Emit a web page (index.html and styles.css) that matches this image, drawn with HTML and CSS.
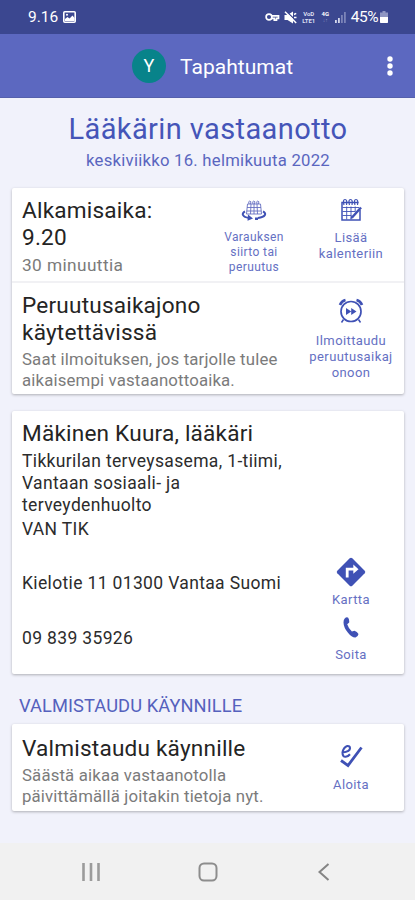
FILE: index.html
```html
<!DOCTYPE html>
<html lang="fi">
<head>
<meta charset="utf-8">
<title>Tapahtumat</title>
<link rel="stylesheet" href="styles.css">
</head>
<body>
<div class="status">
  <span class="clock">9.16</span>
  <svg class="photo" width="13" height="12" viewBox="0 0 13 12"><rect x=".8" y=".8" width="11.4" height="10.4" rx="1" fill="none" stroke="#fff" stroke-width="1.6"/><path d="M2 10V8l2.5-2 2 1.500L9.500 4.500 11.500 7v3z" fill="#fff"/><circle cx="4" cy="3.800" r="1" fill="#fff"/></svg>
  <div class="indicators">
    <svg width="15" height="10" viewBox="0 0 15 10" fill="none" stroke="#fff" stroke-width="1.700"><circle cx="4" cy="5" r="2.900"/><path d="M7 3.800h6.500v2.600h-2v1.800H9.300V6.400H7"/></svg>
    <svg class="mute" width="13" height="13" viewBox="0 0 13 13"><path d="M.5 4h3L9 .5v12L3.500 9h-3z" fill="#fff"/><path d="M2.300.3 13 10.700" stroke="#3b4790" stroke-width="1.200"/><path d="M1 .8 12.200 12M10 3.500l2.200-1.200M10 6.500h2.500" stroke="#fff" stroke-width="1.500"/></svg>
    <div class="volte"><span>VoD</span><span>LTE1</span></div>
    <div class="net"><span>4G</span><i>↓↑</i></div>
    <svg class="signal" width="11" height="11" viewBox="0 0 11 11"><path d="M0 8h1.800v3H0zM3 6h1.800v5H3z" fill="#d5d8eb"/><path d="M6 3h1.800v8H6zM9 0h1.800v11H9z" fill="#7c84b8"/></svg>
    <span class="percent">45%</span>
    <svg class="battery" width="8" height="12" viewBox="0 0 8 12"><path d="M2.500 0h3v1.500H8V6H0V1.500h2.500z" fill="#8f96c3"/><path d="M0 6h8v5.300q0 .7-.7.7H.7Q0 12 0 11.300z" fill="#fff"/></svg>
  </div>
</div>
<header class="appbar">
  <span class="avatar">Y</span>
  <h1 class="appname">Tapahtumat</h1>
  <svg class="more" width="6" height="20" viewBox="0 0 6 20" fill="#fff"><circle cx="3" cy="3" r="2.700"/><circle cx="3" cy="10" r="2.700"/><circle cx="3" cy="17" r="2.700"/></svg>
</header>
<main class="page">
  <h2 class="title">Lääkärin vastaanotto</h2>
  <p class="date">keskiviikko 16. helmikuuta 2022</p>

  <section class="card">
    <div class="row start">
      <div class="info">
        <h3 class="head">Alkamisaika:<br>9.20</h3>
        <p class="note duration">30 minuuttia</p>
      </div>
      <div class="action move">
        <svg width="26" height="24" viewBox="0 0 26 24" fill="none" stroke="#3f51b5"><g stroke-width=".9" stroke="#6670c2"><path d="M6.500 5h13l1 10h-15zM6 8.500h14M5.700 12h14.600M10 5l-.5 10M13 5v10M16 5l.5 10"/><path d="M8 5q-1-3 .8-3t.7 3M12 5q-1-3 .8-3t.7 3M16 5q-1-3 .8-3t.7 3"/></g><path d="M4 12.500c-4 2-2.500 5.500 4 6.500M22 12.500c4 2 2.500 5.500-5 6.500" stroke-width="2"/><path d="m7 15.500 5 4-5.500 2.200z" fill="#3f51b5" stroke="none"/><path d="M14 18.500h3v2.500h-3z" fill="#3f51b5" stroke="none"/></svg>
        <span>Varauksen<br>siirto tai<br>peruutus</span>
      </div>
      <div class="action add">
        <svg width="24" height="24" viewBox="0 0 24 24" fill="none" stroke="#3f51b5"><path d="M21 12v10H3V4.500h16.500" stroke-width="1.500"/><path d="M3.500 9.500H20M3.500 13.500h13M3.500 17.500h9M7.700 8.500v13M12 8.500v13M16.200 8.500v5" stroke-width=".9"/><path d="M5 7Q3.500 1.500 6 1.500T7.500 7M10.500 7Q9 1.500 11.500 1.500T13 7M16 7Q14.500 1.500 17 1.500T18.500 7" stroke-width="1.200"/><path d="m13 19.500 9-10" stroke-width="2.500"/><path d="m11.500 21 .7-3 2.200 2z" fill="#3f51b5" stroke="none"/></svg>
        <span>Lisää<br>kalenteriin</span>
      </div>
    </div>
    <div class="row queue">
      <div class="info">
        <h3 class="head">Peruutusaikajono<br>käytettävissä</h3>
        <p class="note">Saat ilmoituksen, jos tarjolle tulee<br>aikaisempi vastaanottoaika.</p>
      </div>
      <div class="action">
        <svg width="26" height="26" viewBox="0 0 26 26" fill="none" stroke="#3f51b5"><circle cx="13" cy="13.500" r="10" stroke-width="1.700"/><path d="M2 7q1.500-4 5.500-5M24 7q-1.500-4-5.500-5" stroke-width="2.700"/><path d="m5.500 21.500-2 3M20.500 21.500l2 3" stroke-width="1.500"/><path d="m8 10 5.300 3.500L8 17zM13.200 10l5.300 3.500-5.300 3.500z" fill="#3f51b5" stroke="none"/></svg>
        <span>Ilmoittaudu<br>peruutusaikaj<br>onoon</span>
      </div>
    </div>
  </section>

  <section class="card place">
    <h3 class="head doctor">Mäkinen Kuura, lääkäri</h3>
    <p class="body unit">Tikkurilan terveysasema, 1-tiimi,<br>Vantaan sosiaali- ja<br>terveydenhuolto</p>
    <p class="body code">VAN TIK</p>
    <div class="contact map">
      <p class="body">Kielotie 11 01300 Vantaa Suomi</p>
      <div class="action">
        <svg width="30" height="30" viewBox="0 0 30 30"><path d="M13.700 1.300q1.300-1.200 2.600 0l12.400 12.400q1.200 1.300 0 2.600L16.300 28.700q-1.300 1.200-2.600 0L1.300 16.300q-1.200-1.300 0-2.600z" fill="#3f51b5"/><path d="M11.200 20.500v-8.300h8" fill="none" stroke="#fff" stroke-width="2.800"/><path d="m17.300 7.500 5.200 4.700-5.200 4.500z" fill="#fff"/></svg>
        <span>Kartta</span>
      </div>
    </div>
    <div class="contact phone">
      <p class="body">09 839 35926</p>
      <div class="action">
        <svg width="16" height="21" viewBox="0 0 16 21"><path d="M1.500 1.700Q3.500-.3 5.200.7q1.300 2 1 4.800L4.200 7.300q1.300 4.200 4.700 7.200l2.600-.8q2.600.8 4 3.200-.5 2.700-3 3.600-3.800.2-7.500-4.700Q.6 10.600.5 5.500q0-2.500 1-3.800z" fill="#3f51b5"/></svg>
        <span>Soita</span>
      </div>
    </div>
  </section>

  <h2 class="section">VALMISTAUDU KÄYNNILLE</h2>
  <section class="card">
    <div class="row prepare">
      <div class="info">
        <h3 class="head">Valmistaudu käynnille</h3>
        <p class="note">Säästä aikaa vastaanotolla<br>päivittämällä joitakin tietoja nyt.</p>
      </div>
      <div class="action">
        <svg width="24" height="24" viewBox="0 0 24 24" fill="none" stroke="#3f51b5"><path d="M3.500 8.500Q11 7.500 11 4.200 10.800 1.600 8.300 2 4.500 3.300 3.500 8.500q0 4.500 3.200 4.200 2.500-.3 4.300-2.400" stroke-width="2.100"/><path d="m2 16.500 7 5L22.500 3.500" stroke-width="2.800"/></svg>
        <span>Aloita</span>
      </div>
    </div>
  </section>
</main>
<nav class="navbar">
  <svg width="18" height="18" viewBox="0 0 18 18" fill="none" stroke="#9b9b9b" stroke-width="2.600"><path d="M1.500 0v18M9 0v18M16.500 0v18"/></svg>
  <svg width="20" height="20" viewBox="0 0 20 20" fill="none" stroke="#8d8d8d" stroke-width="2"><rect x="1.500" y="1.500" width="17" height="17" rx="4.500"/></svg>
  <svg width="18" height="18" viewBox="0 0 18 18" fill="none" stroke="#858585" stroke-width="2"><path d="M13.500 1 4.500 9l9 8"/></svg>
</nav>
</body>
</html>
```
FILE: styles.css
```css
* { box-sizing: border-box; }
body, h1, h2, h3, p { margin: 0; font-weight: 400; }
body {
  width: 415px;
  height: 900px;
  overflow: hidden;
  display: flex;
  flex-direction: column;
  background: #f1f2fb;
  color: #242424;
  font-family: Roboto, "Liberation Sans", sans-serif;
  white-space: nowrap;
}
svg { display: block; flex: none; }

.status {
  flex: none;
  height: 34px;
  padding: 0 27px 0 28px;
  display: flex;
  align-items: center;
  background: #3b4790;
  color: #fff;
}
.clock { font-size: 15.500px; font-weight: 400; }
.photo { margin-left: 5px; }
.indicators { margin-left: auto; display: flex; align-items: center; }
.mute { margin-left: 4px; }
.volte, .net {
  display: flex;
  flex-direction: column;
  align-items: center;
  font-size: 6px;
  line-height: 7px;
  font-weight: 700;
}
.volte { margin-left: 4px; width: 16px; color: #dcdff0; }
.net { margin-left: 4px; width: 9px; }
.net i { font-style: normal; color: #8f96c3; font-size: 5px; }
.signal { margin-left: 5px; }
.percent { margin-left: 5px; font-size: 15.500px; font-weight: 400; letter-spacing: -.5px; }
.battery { margin-left: 2px; }

.appbar {
  flex: none;
  height: 64px;
  padding: 0 22px 0 132px;
  display: flex;
  align-items: center;
  background: #5c68c0;
  color: #fff;
  border-bottom: 1px solid #5560ac;
}
.avatar {
  width: 34px;
  height: 34px;
  border-radius: 50%;
  background: #08838a;
  font-size: 18px;
  line-height: 34px;
  text-align: center;
}
.appname { margin: 3px 0 0 14px; font-size: 21px; line-height: 30px; letter-spacing: .05px; }
.more { margin-left: auto; }

.page { flex: 1; padding: 14px 11px 0 12px; }
.title { height: 35px; font-size: 29px; line-height: 35px; color: #4555b8; text-align: center; letter-spacing: .4px; }
.date { height: 26px; margin-bottom: 15px; font-size: 16.700px; line-height: 27px; color: #5a66bf; text-align: center; letter-spacing: .25px; }

.card { background: #fff; border-radius: 2px; box-shadow: 0 1px 3px rgba(0, 0, 0, .28); }
.row { display: flex; justify-content: space-between; }
.info { padding-left: 10px; }
.head { font-size: 22.600px; line-height: 27px; letter-spacing: .2px; }
.note { font-size: 16.800px; line-height: 21px; letter-spacing: .15px; color: #7b7b7b; }
.body { font-size: 17.500px; line-height: 22px; letter-spacing: .35px; color: #2c2c2c; }
.action {
  width: 106px;
  display: flex;
  flex-direction: column;
  align-items: center;
  text-align: center;
  font-size: 13px;
  line-height: 16px;
  letter-spacing: .4px;
  color: #6570c3;
}

.start { height: 95px; padding-top: 9px; border-bottom: 2px solid #f1f1f4; }
.duration { margin-top: 4px; font-size: 17.300px; letter-spacing: .4px; }
.move { margin-left: auto; width: 88px; padding-top: 2px; font-size: 12px; line-height: 15px; }
.move span { margin-top: 7px; }
.add { padding-top: 1px; }
.add span { margin-top: 8px; }
.queue { height: 111px; padding-top: 9px; }
.queue .note { margin-top: 3px; }
.queue .action { padding-top: 6px; }
.queue .action span { margin-top: 9px; }

.place { height: 263px; margin-top: 17px; padding: 9px 0 0 10px; }
.unit { margin-top: 3px; }
.code { margin-top: 2px; }
.contact { display: flex; justify-content: space-between; }
.map { height: 53px; margin-top: 17px; }
.map .body { margin-top: 15px; }
.map .action span { margin-top: 5px; }
.phone { margin-top: 7px; }
.phone .body { margin-top: 10px; }
.phone .action span { margin-top: 9px; }

.section { margin: 22px 0 8px 7px; font-size: 18.300px; line-height: 20px; letter-spacing: .08px; color: #5561bd; }
.prepare { height: 87px; padding-top: 11px; }
.prepare .note { margin-top: 3px; }
.prepare .action { padding-top: 9px; }
.prepare .action span { margin-top: 9px; }

.navbar {
  flex: none;
  height: 57px;
  padding: 0 82px;
  display: flex;
  align-items: center;
  justify-content: space-between;
  background: #f1f1f1;
}
```
